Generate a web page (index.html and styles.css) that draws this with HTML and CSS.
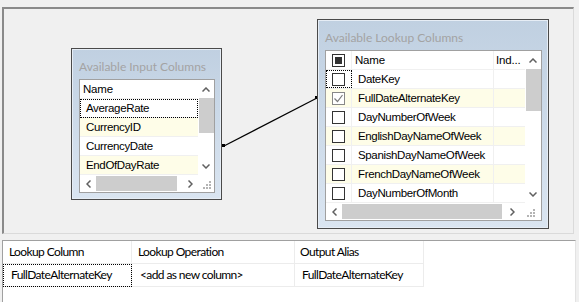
FILE: index.html
```html
<!DOCTYPE html>
<html lang="en">
<head>
  <meta charset="UTF-8" />
  <title>Lookup Transformation Editor - Columns</title>
  <link rel="stylesheet" href="styles.css">
</head>
<body>
  <div class="designer">
    <!-- connector between the two column tables -->
    <svg class="link" width="568" height="223" viewBox="0 0 568 223">
      <line x1="220" y1="137" x2="313" y2="89" stroke="#000" stroke-width="1.2"/>
      <rect x="218" y="135" width="3" height="3" fill="#000"/>
      <rect x="311" y="87" width="3" height="3" fill="#000"/>
    </svg>

    <div class="table-box input-box">
      <div class="box-title">Available Input Columns</div>
      <div class="list">
        <div class="list-main">
          <div class="cols">
            <div class="row head"><span class="cell name">Name</span></div>
            <div class="row focus"><span class="cell name">AverageRate</span></div>
            <div class="row alt"><span class="cell name">CurrencyID</span></div>
            <div class="row"><span class="cell name">CurrencyDate</span></div>
            <div class="row alt"><span class="cell name">EndOfDayRate</span></div>
          </div>
          <div class="vscroll">
            <div class="arrow"><svg width="8" height="5" viewBox="0 0 8 5"><path d="M0.5 4.5 L4 1 L7.5 4.5" fill="none" stroke="#606060" stroke-width="1.5"/></svg></div>
            <div class="thumb input-thumb"></div>
            <div class="spacer"></div>
            <div class="arrow"><svg width="8" height="5" viewBox="0 0 8 5"><path d="M0.5 0.5 L4 4 L7.5 0.5" fill="none" stroke="#606060" stroke-width="1.5"/></svg></div>
          </div>
        </div>
        <div class="hscroll">
          <div class="harrow"><svg width="5" height="8" viewBox="0 0 5 8"><path d="M4.5 0.5 L1 4 L4.5 7.5" fill="none" stroke="#606060" stroke-width="1.5"/></svg></div>
          <div class="hthumb"></div>
          <div class="harrow"><svg width="5" height="8" viewBox="0 0 5 8"><path d="M0.5 0.5 L4 4 L0.5 7.5" fill="none" stroke="#606060" stroke-width="1.5"/></svg></div>
          <div class="grip"><svg width="9" height="9" viewBox="0 0 9 9" fill="#b4b4b4"><rect x="6" y="0" width="2" height="2"/><rect x="3" y="3" width="2" height="2"/><rect x="6" y="3" width="2" height="2"/><rect x="0" y="6" width="2" height="2"/><rect x="3" y="6" width="2" height="2"/><rect x="6" y="6" width="2" height="2"/></svg></div>
        </div>
      </div>
    </div>

    <div class="table-box lookup-box">
      <div class="box-title">Available Lookup Columns</div>
      <div class="list">
        <div class="list-main">
          <div class="cols">
            <div class="row head">
              <span class="cell check"><span class="box partial"></span></span>
              <span class="cell name">Name</span>
              <span class="cell ind">Ind...</span>
            </div>
            <div class="row">
              <span class="cell check focus-cell"><span class="box"></span></span>
              <span class="cell name">DateKey</span>
              <span class="cell ind"></span>
            </div>
            <div class="row alt">
              <span class="cell check"><span class="box checked"><svg width="11" height="11" viewBox="0 0 11 11"><path d="M1.5 5.5 L4.5 8.5 L9.5 2" fill="none" stroke="#7a7a7a" stroke-width="1.2"/></svg></span></span>
              <span class="cell name">FullDateAlternateKey</span>
              <span class="cell ind"></span>
            </div>
            <div class="row">
              <span class="cell check"><span class="box"></span></span>
              <span class="cell name">DayNumberOfWeek</span>
              <span class="cell ind"></span>
            </div>
            <div class="row alt">
              <span class="cell check"><span class="box"></span></span>
              <span class="cell name">EnglishDayNameOfWeek</span>
              <span class="cell ind"></span>
            </div>
            <div class="row">
              <span class="cell check"><span class="box"></span></span>
              <span class="cell name">SpanishDayNameOfWeek</span>
              <span class="cell ind"></span>
            </div>
            <div class="row alt">
              <span class="cell check"><span class="box"></span></span>
              <span class="cell name">FrenchDayNameOfWeek</span>
              <span class="cell ind"></span>
            </div>
            <div class="row">
              <span class="cell check"><span class="box"></span></span>
              <span class="cell name">DayNumberOfMonth</span>
              <span class="cell ind"></span>
            </div>
          </div>
          <div class="vscroll">
            <div class="arrow"><svg width="8" height="5" viewBox="0 0 8 5"><path d="M0.5 4.5 L4 1 L7.5 4.5" fill="none" stroke="#606060" stroke-width="1.5"/></svg></div>
            <div class="thumb lookup-thumb"></div>
            <div class="spacer"></div>
            <div class="arrow"><svg width="8" height="5" viewBox="0 0 8 5"><path d="M0.5 0.5 L4 4 L7.5 0.5" fill="none" stroke="#606060" stroke-width="1.5"/></svg></div>
          </div>
        </div>
        <div class="hscroll">
          <div class="harrow"><svg width="5" height="8" viewBox="0 0 5 8"><path d="M4.5 0.5 L1 4 L4.5 7.5" fill="none" stroke="#606060" stroke-width="1.5"/></svg></div>
          <div class="hthumb"></div>
          <div class="harrow"><svg width="5" height="8" viewBox="0 0 5 8"><path d="M0.5 0.5 L4 4 L0.5 7.5" fill="none" stroke="#606060" stroke-width="1.5"/></svg></div>
          <div class="grip"><svg width="9" height="9" viewBox="0 0 9 9" fill="#b4b4b4"><rect x="6" y="0" width="2" height="2"/><rect x="3" y="3" width="2" height="2"/><rect x="6" y="3" width="2" height="2"/><rect x="0" y="6" width="2" height="2"/><rect x="3" y="6" width="2" height="2"/><rect x="6" y="6" width="2" height="2"/></svg></div>
        </div>
      </div>
    </div>
  </div>

  <div class="mapping">
    <div class="map-row map-head">
      <span class="map-cell">Lookup Column</span>
      <span class="map-cell">Lookup Operation</span>
      <span class="map-cell">Output Alias</span>
    </div>
    <div class="map-row">
      <span class="map-cell current">FullDateAlternateKey</span>
      <span class="map-cell">&lt;add as new column&gt;</span>
      <span class="map-cell">FullDateAlternateKey</span>
    </div>
  </div>
</body>
</html>
```

FILE: styles.css
```css
* { box-sizing: border-box; margin: 0; padding: 0; }

body {
  font-family: 'Lato', 'Liberation Sans', sans-serif;
  font-size: 12px;
  background-color: #f0f0f0;
  color: #000;
  width: 579px;
  height: 302px;
  overflow: hidden;
}

/* design surface */
.designer {
  position: relative;
  margin: 7px 0 0 2px;
  width: 572px;
  height: 227px;
  border-top: 2px solid #8a8a8a;
  border-left: 2px solid #8a8a8a;
  border-right: 1px solid #dadada;
  border-bottom: 1px solid #dadada;
  background-color: #f0f0f0;
}

.link {
  position: absolute;
  left: 0;
  top: 0;
}

.table-box {
  position: absolute;
  border: 1px solid #4a4a4a;
  background: linear-gradient(to bottom, #c0d0e1, #dae5f1);
  box-shadow: inset 0 0 0 1px #e6edf5;
  display: flex;
  flex-direction: column;
}

.input-box {
  left: 67px;
  top: 39px;
  width: 151px;
  height: 152px;
  padding: 0 6px 6px 7px;
}

.lookup-box {
  left: 313px;
  top: 10px;
  width: 232px;
  height: 210px;
  padding: 0 6px 8px 7px;
}

.box-title {
  height: 30px;
  line-height: 30px;
  padding-top: 3px;
  color: #a3a3a3;
  font-size: 12px;
  white-space: nowrap;
}

.list {
  flex: 1;
  display: flex;
  flex-direction: column;
  border: 1px solid #a0a0a0;
  background-color: #fff;
}

.list-main {
  flex: 1;
  display: flex;
  min-height: 0;
}

.cols {
  flex: 1;
  overflow: hidden;
}

.row {
  display: flex;
  height: 19px;
  border-bottom: 1px solid #f0f0f0;
  font-family: 'Liberation Sans', sans-serif;
  font-size: 11.5px;
  letter-spacing: -0.35px;
  line-height: 18px;
}

.row.head {
  letter-spacing: -0.2px;
}

.row.alt {
  background-color: #fefde8;
}

.input-box .row .name {
  padding-left: 6px;
}

.input-box .row.head .name {
  padding-left: 3px;
}

.input-box .row.focus {
  outline: 1px dotted #000;
  outline-offset: -1px;
}

.cell {
  display: block;
  white-space: nowrap;
  overflow: hidden;
}

.cell.check {
  width: 26px;
  border-right: 1px solid #f0f0f0;
  display: flex;
  align-items: center;
  justify-content: center;
}

.cell.name {
  flex: 1;
  padding-left: 6px;
}

.lookup-box .row.head .name {
  padding-left: 3px;
}

.cell.ind {
  width: 32px;
  border-left: 1px solid #f0f0f0;
  padding-left: 2px;
}

.focus-cell {
  outline: 1px dotted #000;
  outline-offset: -1px;
}

.box {
  width: 13px;
  height: 13px;
  border: 1px solid #333;
  background-color: #fff;
  display: flex;
  align-items: center;
  justify-content: center;
}

.box.partial::after {
  content: '';
  width: 7px;
  height: 7px;
  background-color: #333;
}

.box.checked {
  border-color: #888;
}

/* scrollbars */
.vscroll {
  width: 16px;
  display: flex;
  flex-direction: column;
  align-items: center;
  background-color: #fff;
}

.arrow {
  height: 18px;
  display: flex;
  align-items: center;
  justify-content: center;
}

.thumb {
  width: 15px;
  background-color: #cdcdcd;
}

.input-thumb { height: 35px; }
.lookup-thumb { height: 42px; }

.spacer { flex: 1; }

.hscroll {
  height: 17px;
  display: flex;
  align-items: center;
  background-color: #fff;
}

.harrow {
  width: 16px;
  display: flex;
  align-items: center;
  justify-content: center;
}

.hthumb {
  height: 15px;
  background-color: #cdcdcd;
  flex: 1;
}

.input-box .hthumb { flex: 0 0 81px; }
.lookup-box .hthumb { flex: 0 0 160px; }

.input-box .hscroll .harrow:nth-child(3) { margin-left: auto; }
.lookup-box .hscroll .harrow:nth-child(3) { width: 20px; }

.grip {
  width: 16px;
  height: 17px;
  display: flex;
  align-items: flex-end;
  justify-content: flex-end;
  padding: 0 2px 2px 0;
}

/* column mapping grid */
.mapping {
  margin: 6px 0 0 2px;
  width: 574px;
  height: 70px;
  border-top: 1px solid #a0a0a0;
  border-left: 1px solid #a0a0a0;
  border-right: 1px solid #e3e3e3;
  background-color: #fff;
}

.map-row {
  display: flex;
  height: 23px;
}

.map-cell {
  height: 23px;
  line-height: 22px;
  border-right: 1px solid #ececec;
  border-bottom: 1px solid #ececec;
  white-space: nowrap;
  font-size: 12px;
  letter-spacing: -0.6px;
}

.map-cell:nth-child(1) { width: 129px; padding-left: 6px; }
.map-cell:nth-child(2) { width: 163px; padding-left: 6px; }
.map-cell:nth-child(3) { width: 129px; padding-left: 5px; }

.map-row:not(.map-head) .map-cell { padding-left: 8px; }
.map-row:not(.map-head) .map-cell:nth-child(3) { padding-left: 7px; }

.map-cell.current {
  outline: 1px dotted #000;
  outline-offset: -1px;
}
```
